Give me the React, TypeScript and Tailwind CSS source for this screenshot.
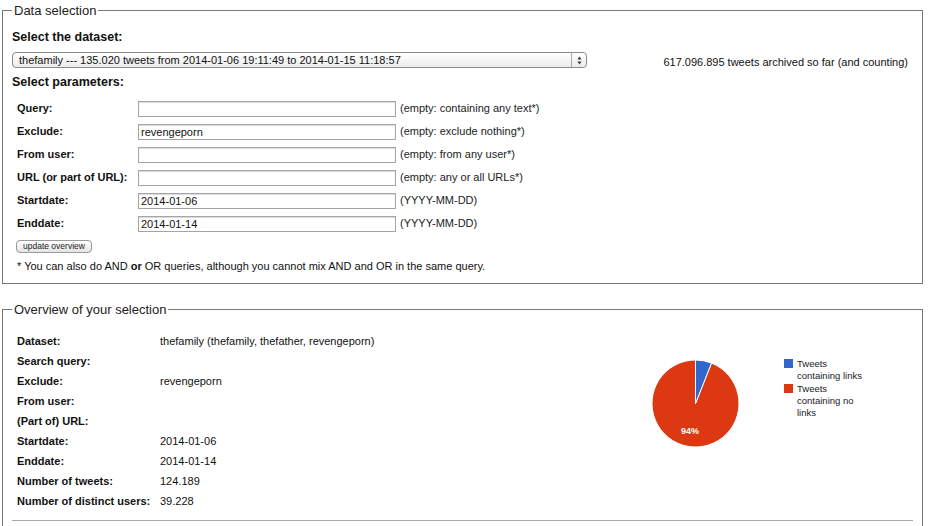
import React from 'react'

const FONT = { fontFamily: '"Liberation Sans", Arial, Helvetica, sans-serif' }

const PARAMS = [
  { label: 'Query:', value: '', hint: '(empty: containing any text*)' },
  { label: 'Exclude:', value: 'revengeporn', hint: '(empty: exclude nothing*)' },
  { label: 'From user:', value: '', hint: '(empty: from any user*)' },
  { label: 'URL (or part of URL):', value: '', hint: '(empty: any or all URLs*)' },
  { label: 'Startdate:', value: '2014-01-06', hint: '(YYYY-MM-DD)' },
  { label: 'Enddate:', value: '2014-01-14', hint: '(YYYY-MM-DD)' },
]

const OVERVIEW = [
  ['Dataset:', 'thefamily (thefamily, thefather, revengeporn)'],
  ['Search query:', ''],
  ['Exclude:', 'revengeporn'],
  ['From user:', ''],
  ['(Part of) URL:', ''],
  ['Startdate:', '2014-01-06'],
  ['Enddate:', '2014-01-14'],
  ['Number of tweets:', '124.189'],
  ['Number of distinct users:', '39.228'],
]

function PieChart() {
  const cx = 54.5
  const cy = 72.5
  const r = 43.5
  const share = 0.06
  const a = share * Math.PI * 2
  const x1 = cx + r * Math.sin(a)
  const y1 = cy - r * Math.cos(a)
  return (
    <svg width="272" height="180" viewBox="0 0 272 180" style={FONT}>
      <path d={`M${cx},${cy} L${x1},${y1} A${r},${r} 0 1 1 ${cx},${cy - r} Z`} fill="#dc3912" stroke="#fff" strokeWidth="1" />
      <path d={`M${cx},${cy} L${cx},${cy - r} A${r},${r} 0 0 1 ${x1},${y1} Z`} fill="#3366cc" stroke="#fff" strokeWidth="1" />
      <text x="49" y="103" fill="#fff" fontSize="9" fontWeight="bold" textAnchor="middle">94%</text>

      <rect x="143" y="28" width="9" height="9" fill="#3366cc" />
      <text x="156" y="36" fontSize="9.5" fill="#222">Tweets</text>
      <text x="156" y="48" fontSize="9.5" fill="#222">containing links</text>

      <rect x="143" y="53" width="9" height="9" fill="#dc3912" />
      <text x="156" y="61" fontSize="9.5" fill="#222">Tweets</text>
      <text x="156" y="73" fontSize="9.5" fill="#222">containing no</text>
      <text x="156" y="85" fontSize="9.5" fill="#222">links</text>
    </svg>
  )
}

export default function App() {
  return (
    <div className="bg-white text-[#111] pl-[2px] pr-[8px] pt-[3px] h-[526px] overflow-hidden" style={FONT}>
      {/* Data selection */}
      <fieldset className="border border-[#777] px-[9px] pb-[9px]">
        <legend className="ml-0 px-[2px] text-[13px] leading-[15px] text-[#222]">Data selection</legend>

        <div className="pt-[12px] text-[12.5px] leading-[15px] font-bold">Select the dataset:</div>

        <div className="mt-[7px] flex items-start">
          <div className="flex h-[16px] w-[575px] items-stretch rounded-[4px] border border-[#8a8a8a] bg-gradient-to-b from-white to-[#ececec] text-[11px] leading-[14px]">
            <span className="flex-1 pl-[6px]">thefamily --- 135.020 tweets from 2014-01-06 19:11:49 to 2014-01-15 11:18:57</span>
            <span className="flex w-[15px] items-center justify-center border-l border-[#aaa]">
              <svg width="5" height="9" viewBox="0 0 5 9">
                <path d="M2.5 0.5 L4.5 3.5 L0.5 3.5 Z" fill="#333" />
                <path d="M2.5 8.5 L4.5 5.5 L0.5 5.5 Z" fill="#333" />
              </svg>
            </span>
          </div>
          <span className="ml-auto pt-[4px] pr-[5px] text-[11px] leading-[13px]">617.096.895 tweets archived so far (and counting)</span>
        </div>

        <div className="mt-[6px] text-[12.5px] leading-[15px] font-bold">Select parameters:</div>

        <div className="mt-[7px] pl-[5px]">
          {PARAMS.map((p) => (
            <div key={p.label} className="flex h-[23px] items-center">
              <span className="w-[121px] text-[11px] font-bold">{p.label}</span>
              <input
                readOnly
                value={p.value}
                className="h-[16px] w-[258px] border border-[#a5a5a5] bg-white px-[2px] text-[11px] leading-[14px] text-[#111] shadow-[inset_0_1px_1px_rgba(0,0,0,0.15)] outline-none"
                style={FONT}
              />
              <span className="ml-[4px] text-[11px] text-[#222]">{p.hint}</span>
            </div>
          ))}
        </div>

        <button
          className="mt-[5px] ml-[4px] block h-[13px] rounded-[4px] border border-[#9a9a9a] bg-gradient-to-b from-white to-[#e4e4e4] px-[6px] text-[8.5px] leading-[11px] text-[#222]"
          style={FONT}
        >
          update overview
        </button>

        <div className="mt-[6px] pl-[5px] text-[11px] leading-[15px]">
          * You can also do AND <b>or</b> OR queries, although you cannot mix AND and OR in the same query.
        </div>
      </fieldset>

      {/* Overview */}
      <fieldset className="mt-[18px] border border-[#777] px-[9px] pb-[20px]">
        <legend className="ml-0 px-[2px] text-[13px] leading-[15px] text-[#222]">Overview of your selection</legend>

        <div className="flex pt-[14px]">
          <div className="flex-1 pl-[5px]">
            {OVERVIEW.map(([label, value]) => (
              <div key={label} className="flex h-[20px] items-center text-[11px]">
                <span className="w-[143px] font-bold">{label}</span>
                <span>{value}</span>
              </div>
            ))}
          </div>
          <PieChart />
        </div>

        <hr className="mt-[9px] border-t border-[#aaa]" />
      </fieldset>
    </div>
  )
}
